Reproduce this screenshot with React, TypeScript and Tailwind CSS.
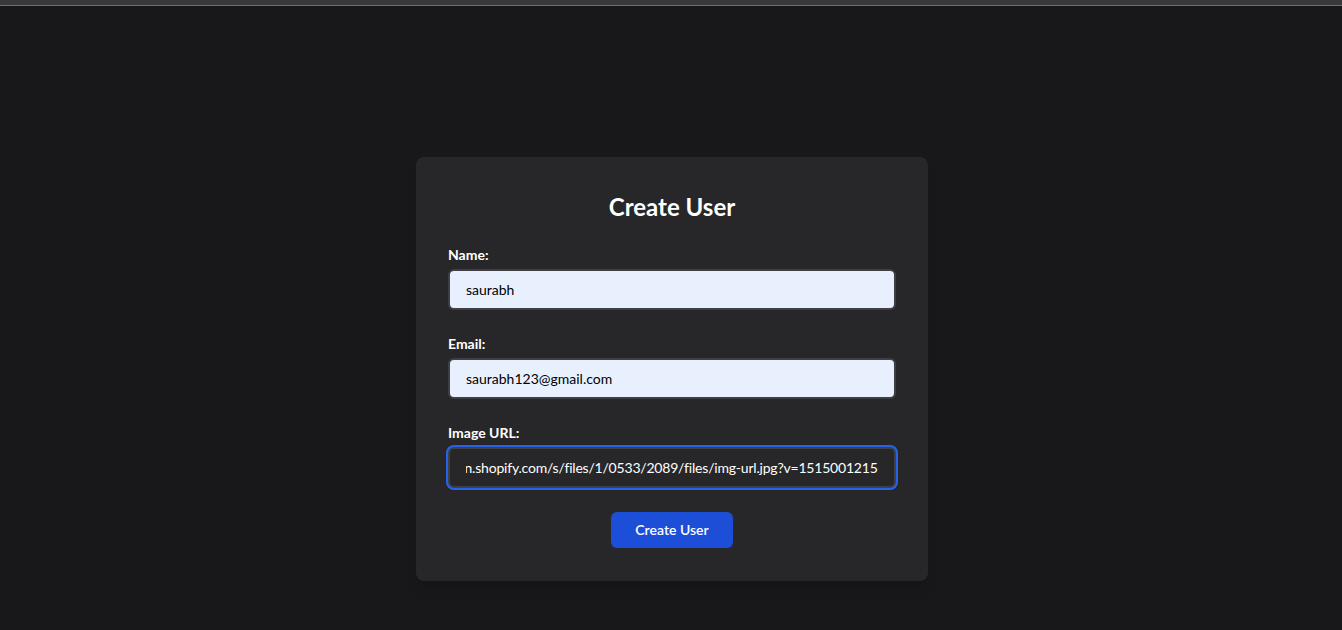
import { useEffect, useRef, useState } from "react";

export default function App() {
  const [name, setName] = useState("saurabh");
  const [email, setEmail] = useState("saurabh123@gmail.com");
  const [image, setImage] = useState(
    "https://cdn.shopify.com/s/files/1/0533/2089/files/img-url.jpg?v=1515001215"
  );
  const imageRef = useRef<HTMLInputElement>(null);

  useEffect(() => {
    const el = imageRef.current;
    if (!el) return;
    el.focus();
    el.setSelectionRange(el.value.length, el.value.length);
    el.scrollLeft = el.scrollWidth;
  }, []);

  return (
    <main className="min-h-screen bg-[#18181b] font-['Lato',sans-serif]">
      <div className="h-[5px] bg-[#383838] border-b border-[#6e6e6e] box-content" />

      <div className="flex justify-center pt-[151px] pl-[2px]">
        <form
          className="w-full max-w-lg bg-[#27272a] rounded-lg px-8 pt-8 pb-[33px] shadow-lg"
          onSubmit={(e) => e.preventDefault()}
        >
          <h1 className="text-2xl leading-9 font-bold text-white text-center mb-5">Create User</h1>

          <div className="mb-6">
            <label className="block text-sm font-bold text-white mb-1">Name:</label>
            <input
              type="text"
              value={name}
              onChange={(e) => setName(e.target.value)}
              className="w-full px-4 py-[8.5px] text-sm rounded-md border-2 border-[#3f3f46] bg-[#e8f0fe] text-black outline-none"
            />
          </div>

          <div className="mb-6">
            <label className="block text-sm font-bold text-white mb-1">Email:</label>
            <input
              type="email"
              value={email}
              onChange={(e) => setEmail(e.target.value)}
              className="w-full px-4 py-[8.5px] text-sm rounded-md border-2 border-[#3f3f46] bg-[#e8f0fe] text-black outline-none"
            />
          </div>

          <div className="mb-6">
            <label className="block text-sm font-bold text-white mb-1">Image URL:</label>
            <input
              ref={imageRef}
              type="text"
              value={image}
              onChange={(e) => setImage(e.target.value)}
              className="w-full px-4 py-[8.5px] text-sm tracking-[-0.2px] rounded-md border-2 border-[#3f3f46] bg-[#27272a] text-white caret-white outline-none focus:ring-2 focus:ring-[#2563eb]"
            />
          </div>

          <div className="flex justify-center">
            <button
              type="submit"
              className="bg-[#1d4ed8] text-white text-sm font-semibold px-6 py-2 rounded-md"
            >
              Create User
            </button>
          </div>
        </form>
      </div>
    </main>
  );
}
